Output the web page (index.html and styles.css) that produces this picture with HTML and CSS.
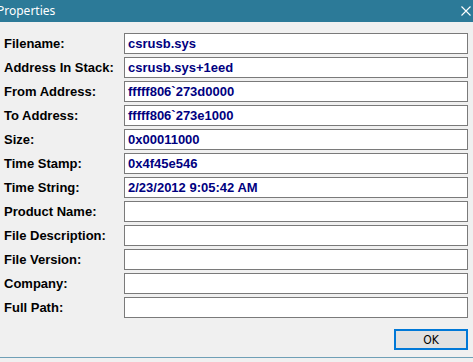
FILE: index.html
```html
<!DOCTYPE html>
<html>
<head>
<meta charset="utf-8">
<link rel="stylesheet" href="styles.css">
</head>
<body>
<div class="window">
  <div class="titlebar">
    <span class="title">Properties</span>
    <svg class="close" width="10" height="10" viewBox="0 0 10 10"><path d="M0.5 0.5 L9.5 9.5 M9.5 0.5 L0.5 9.5" stroke="#fff" stroke-width="1.1" fill="none"/></svg>
  </div>
  <div class="content">
    <div class="grid">
      <div class="label">Filename:</div><div class="field">csrusb.sys</div>
      <div class="label">Address In Stack:</div><div class="field">csrusb.sys+1eed</div>
      <div class="label">From Address:</div><div class="field">fffff806`273d0000</div>
      <div class="label">To Address:</div><div class="field">fffff806`273e1000</div>
      <div class="label">Size:</div><div class="field">0x00011000</div>
      <div class="label">Time Stamp:</div><div class="field">0x4f45e546</div>
      <div class="label">Time String:</div><div class="field">2/23/2012 9:05:42 AM</div>
      <div class="label">Product Name:</div><div class="field"></div>
      <div class="label">File Description:</div><div class="field"></div>
      <div class="label">File Version:</div><div class="field"></div>
      <div class="label">Company:</div><div class="field"></div>
      <div class="label">Full Path:</div><div class="field"></div>
    </div>
    <div class="buttons">
      <div class="btn">OK</div>
    </div>
  </div>
  <div class="bottom"></div>
</div>
</body>
</html>
```
FILE: styles.css
```css
html, body {
  margin: 0;
  padding: 0;
  background: #e6e6e6;
}
.window {
  width: 473px;
  height: 362px;
  display: flex;
  flex-direction: column;
  background: #f0f0f0;
}
.titlebar {
  height: 22px;
  background: #2c7a98;
  display: flex;
  align-items: center;
  justify-content: space-between;
  padding-right: 2px;
  box-sizing: border-box;
}
.title {
  color: #fff;
  font-family: "Noto Sans", "Open Sans", sans-serif;
  font-size: 12px;
  margin-left: -3px;
  margin-top: -1px;
}
.close {
  display: block;
  margin-top: -1px;
}
.content {
  padding: 11px 5px 7px 4px;
  display: flex;
  flex-direction: column;
}
.grid {
  display: grid;
  grid-template-columns: 120px 344px;
  grid-auto-rows: 21px;
  row-gap: 3px;
}
.label {
  font-family: "Liberation Sans", Arial, sans-serif;
  font-weight: bold;
  font-size: 13px;
  color: #000;
  display: flex;
  align-items: center;
  white-space: nowrap;
}
.field {
  box-sizing: border-box;
  border: 1px solid #7a7a7a;
  background: #fff;
  font-family: "Liberation Sans", Arial, sans-serif;
  font-weight: bold;
  font-size: 13px;
  color: #00007f;
  padding-left: 3px;
  display: flex;
  align-items: center;
  white-space: nowrap;
}
.buttons {
  display: flex;
  justify-content: flex-end;
  margin-top: 11px;
}
.btn {
  box-sizing: border-box;
  width: 74px;
  height: 21px;
  border: 2px solid #0078d7;
  background: #e1e1e1;
  font-family: "DejaVu Sans Condensed", "Liberation Sans Narrow", sans-serif;
  font-size: 12px;
  color: #000;
  display: flex;
  align-items: center;
  justify-content: center;
}
.bottom {
  height: 1px;
  background: #6f9fb6;
}
```
